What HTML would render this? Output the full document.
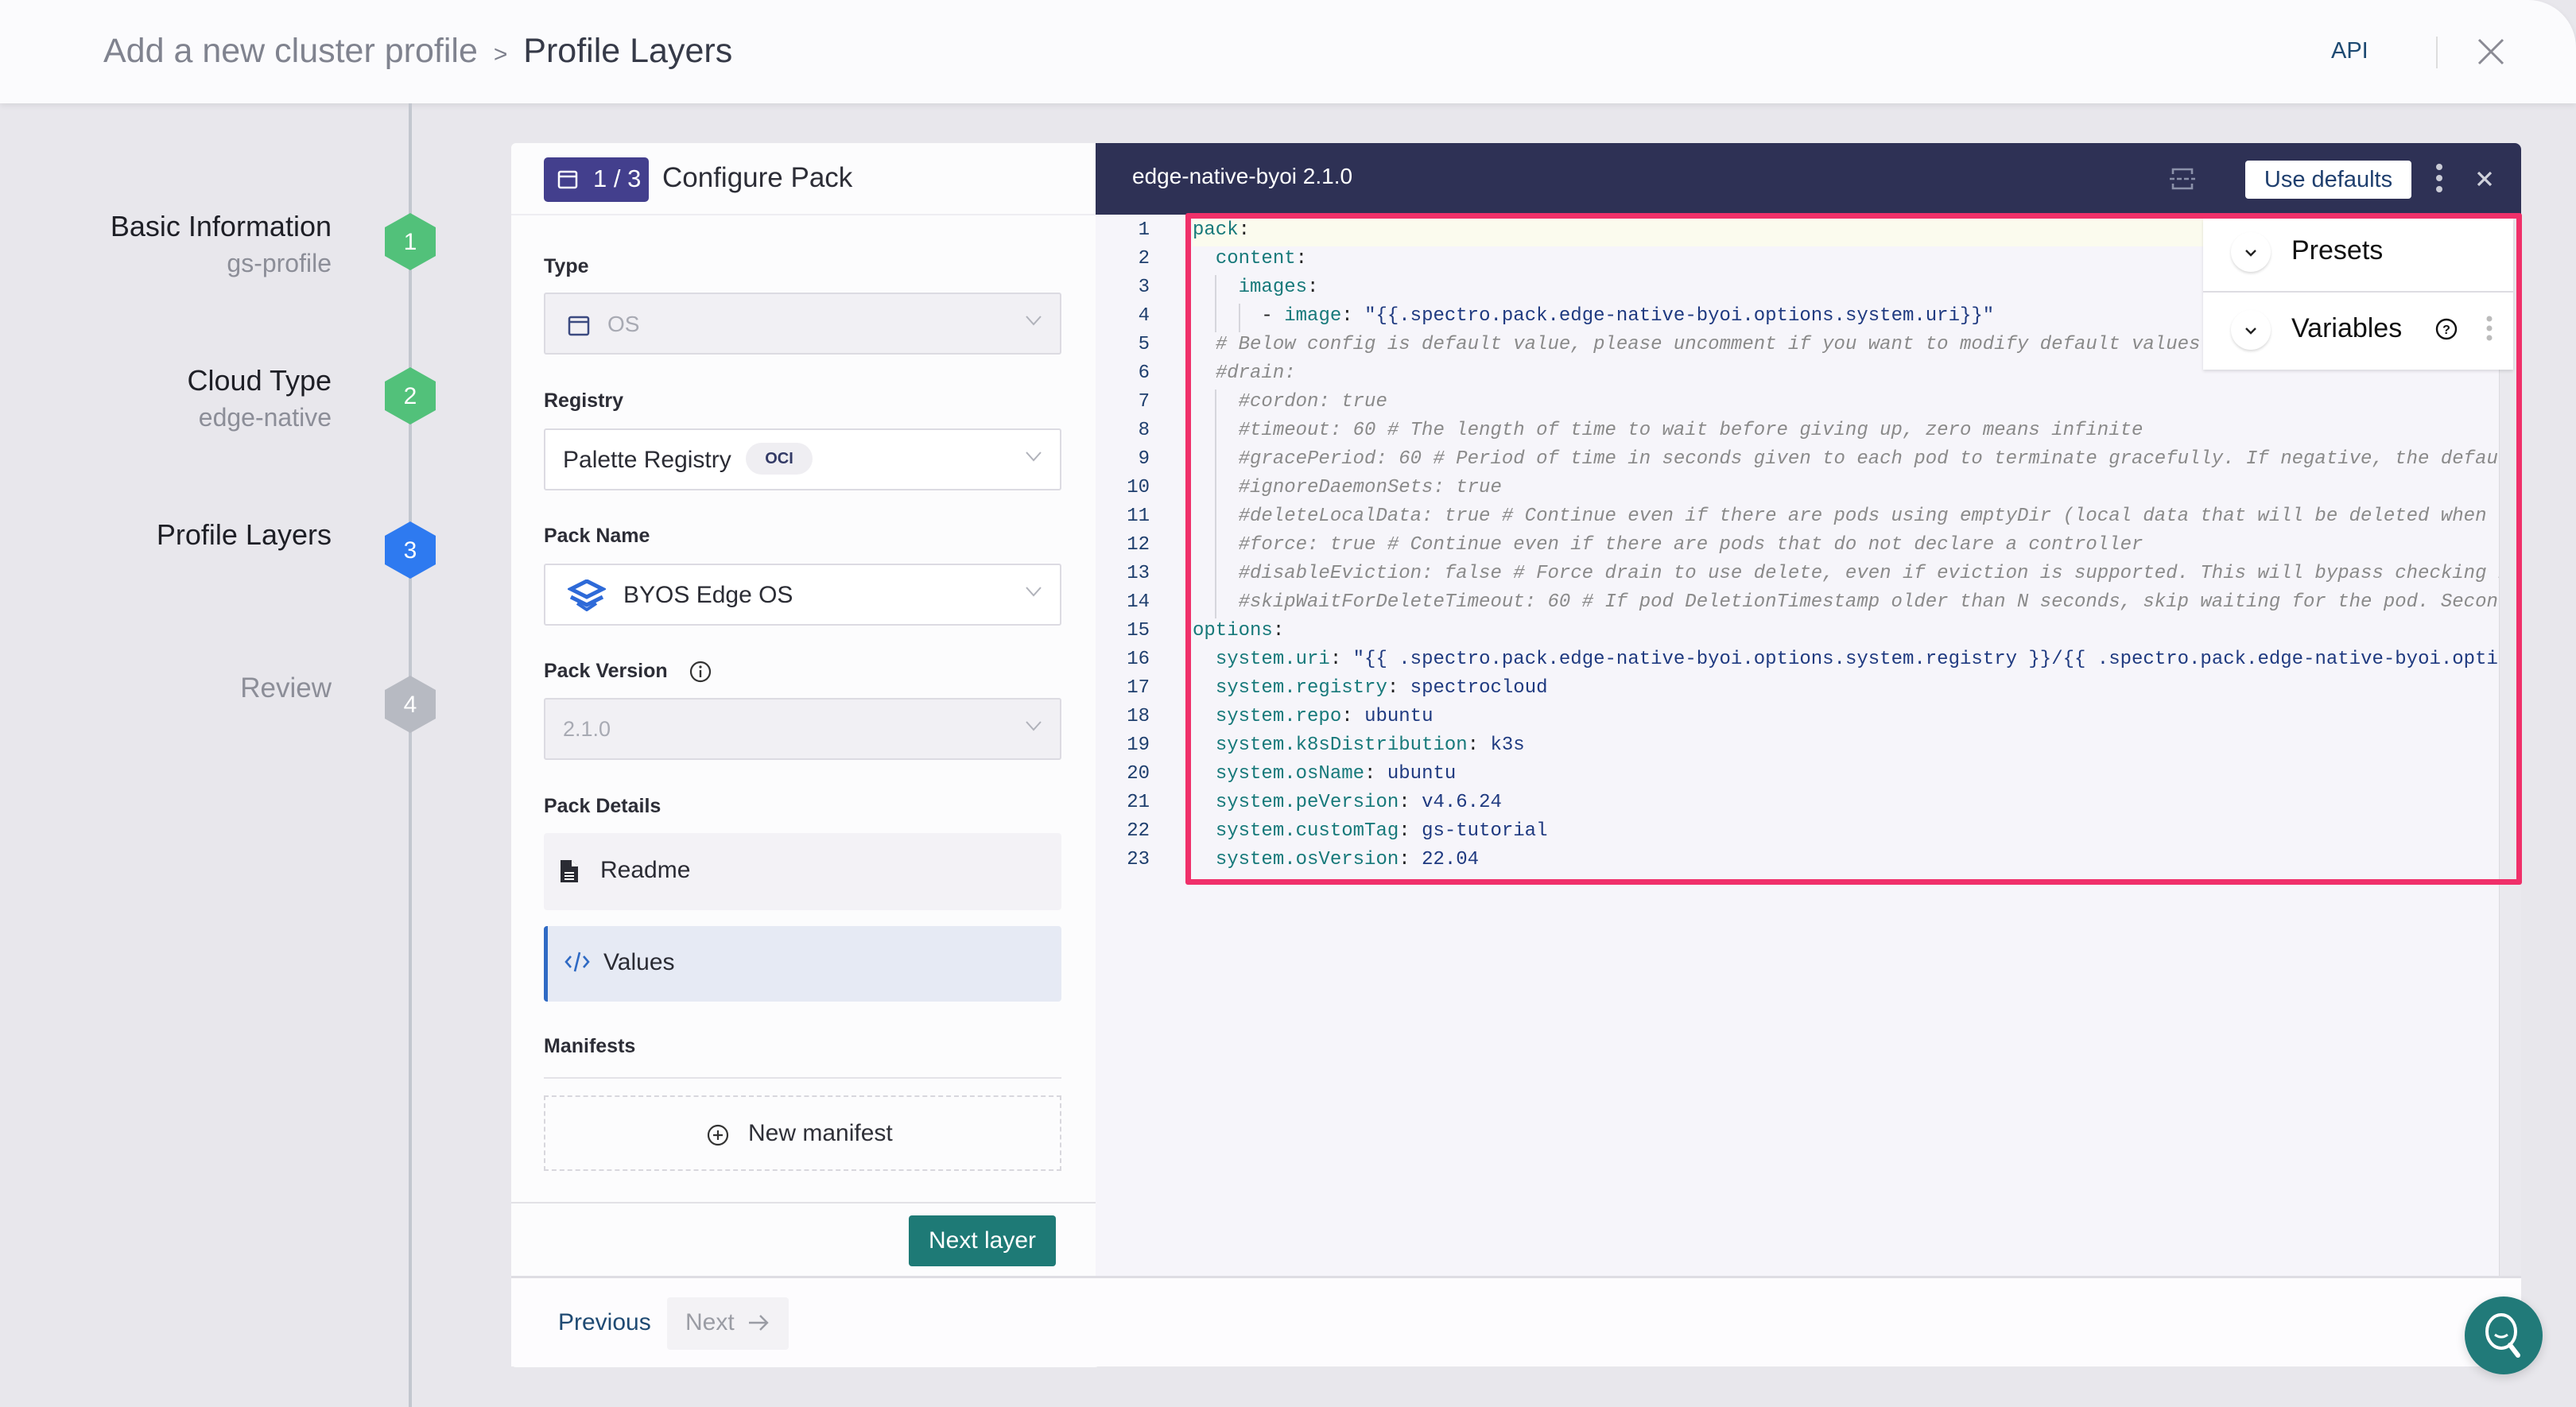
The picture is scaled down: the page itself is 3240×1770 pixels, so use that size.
<!DOCTYPE html>
<html><head><meta charset="utf-8">
<style>
*{box-sizing:border-box;margin:0;padding:0}
html,body{width:3240px;height:1770px;overflow:hidden;background:#e8e7ec;font-family:"Liberation Sans",sans-serif}
.abs{position:absolute}
.hdr{left:0;top:0;width:3240px;height:130px;background:#fbfbfd;box-shadow:0 3px 8px rgba(0,0,0,.08);border-top-right-radius:60px}
.lbl{font-size:25px;font-weight:bold;color:#2c2d36}
.sel{left:684px;width:651px;height:78px;border:2px solid #dcdbe2;border-radius:3px;background:#fff}
.sel .chev{position:absolute;right:22px;top:26px}
.code{left:1380px;top:270px;width:1763px;height:840px;overflow:hidden;font-family:"Liberation Mono",monospace;font-size:24px;line-height:36px}
.k{color:#17797a}.v{color:#1f3a80}.c{color:#8a8a8a;font-style:italic}.p{color:#222}
.step{text-align:right;right:2823px;}
.g{position:absolute;width:2px;background:#d6d6dc}
</style></head><body>
<div class="abs hdr"></div>
<div class="abs" style="left:130px;top:40px;font-size:43px;color:#80838f;white-space:nowrap">Add a new cluster profile <span style="font-size:30px;margin:0 8px;color:#7d7f8c">&gt;</span> <span style="color:#363a48">Profile Layers</span></div>
<div class="abs" style="left:2932px;top:48px;font-size:29px;color:#1e4a72">API</div>
<div class="abs" style="left:3064px;top:46px;width:2px;height:40px;background:#ddd"></div>
<svg class="abs" style="left:3116px;top:48px" width="34" height="34" viewBox="0 0 34 34"><path d="M2 2L32 32M32 2L2 32" stroke="#8a8a94" stroke-width="3"/></svg>

<div class="abs" style="left:514px;top:130px;width:4px;height:1640px;background:#c3c7cf"></div>
<svg class="abs" style="left:484px;top:268px" width="64" height="72" viewBox="0 0 64 72"><path d="M32 0L64 18V54L32 72L0 54V18Z" fill="#52c17a"/><text x="32" y="46" font-size="30" fill="#fff" text-anchor="middle" font-family="Liberation Sans">1</text></svg>
<svg class="abs" style="left:484px;top:462px" width="64" height="72" viewBox="0 0 64 72"><path d="M32 0L64 18V54L32 72L0 54V18Z" fill="#52c17a"/><text x="32" y="46" font-size="30" fill="#fff" text-anchor="middle" font-family="Liberation Sans">2</text></svg>
<svg class="abs" style="left:484px;top:656px" width="64" height="72" viewBox="0 0 64 72"><path d="M32 0L64 18V54L32 72L0 54V18Z" fill="#2e7af0"/><text x="32" y="46" font-size="30" fill="#fff" text-anchor="middle" font-family="Liberation Sans">3</text></svg>
<svg class="abs" style="left:484px;top:850px" width="64" height="72" viewBox="0 0 64 72"><path d="M32 0L64 18V54L32 72L0 54V18Z" fill="#b7bac2"/><text x="32" y="46" font-size="30" fill="#fff" text-anchor="middle" font-family="Liberation Sans">4</text></svg>
<div class="abs step" style="top:264px;font-size:36px;color:#1e1f26">Basic Information</div>
<div class="abs step" style="top:313px;font-size:32px;color:#8c8e98">gs-profile</div>
<div class="abs step" style="top:458px;font-size:36px;color:#1e1f26">Cloud Type</div>
<div class="abs step" style="top:507px;font-size:32px;color:#8c8e98">edge-native</div>
<div class="abs step" style="top:652px;font-size:36px;color:#1e1f26">Profile Layers</div>
<div class="abs step" style="top:846px;font-size:35px;color:#8c8e98">Review</div>

<div class="abs" style="left:643px;top:180px;width:740px;height:1540px;background:#fcfcfd;border-radius:6px"></div>
<div class="abs" style="left:643px;top:1605px;width:2528px;height:114px;background:#fdfcfe;border-top:3px solid #dedde3"></div>
<div class="abs" style="left:643px;top:269px;width:735px;height:2px;background:#eeedf2"></div>
<div class="abs" style="left:684px;top:198px;width:132px;height:56px;background:#433f8d;border-radius:5px"></div>
<svg class="abs" style="left:700px;top:212px" width="28" height="28" viewBox="0 0 28 28"><rect x="3" y="4" width="22" height="20" rx="2" fill="none" stroke="#fff" stroke-width="2.5"/><line x1="3" y1="10" x2="25" y2="10" stroke="#fff" stroke-width="2.5"/></svg>
<div class="abs" style="left:746px;top:207px;font-size:31px;color:#fff">1 / 3</div>
<div class="abs" style="left:833px;top:204px;font-size:35px;color:#2c2d36">Configure Pack</div>

<div class="abs lbl" style="left:684px;top:321px">Type</div>
<div class="abs sel" style="top:368px;background:#f1f0f4"><svg style="position:absolute;left:28px;top:27px" width="28" height="26" viewBox="0 0 28 26"><rect x="2" y="2" width="24" height="22" rx="2" fill="none" stroke="#3b4a80" stroke-width="2.5"/><line x1="2" y1="8" x2="26" y2="8" stroke="#3b4a80" stroke-width="2.5"/></svg><span style="position:absolute;left:78px;top:22px;font-size:28px;color:#a8aab3">OS</span><svg class="chev" width="22" height="14" viewBox="0 0 22 14"><path d="M2 2L11 12L20 2" fill="none" stroke="#b0b2ba" stroke-width="2"/></svg></div>

<div class="abs lbl" style="left:684px;top:490px">Registry</div>
<div class="abs sel" style="top:539px"><span style="position:absolute;left:22px;top:21px;font-size:30px;color:#2b2c34">Palette Registry</span><span style="position:absolute;left:252px;top:16px;width:84px;height:40px;border-radius:20px;background:#efeef2;font-size:20px;font-weight:bold;color:#333a66;text-align:center;line-height:40px">OCI</span><svg class="chev" width="22" height="14" viewBox="0 0 22 14"><path d="M2 2L11 12L20 2" fill="none" stroke="#b0b2ba" stroke-width="2"/></svg></div>

<div class="abs lbl" style="left:684px;top:660px">Pack Name</div>
<div class="abs sel" style="top:709px"><svg style="position:absolute;left:28px;top:18px" width="48" height="40" viewBox="0 0 48 40"><path d="M24 2L44 12L24 22L4 12Z" fill="none" stroke="#2e6ad8" stroke-width="5"/><path d="M4 22L24 32L44 22" fill="none" stroke="#2e6ad8" stroke-width="5"/><path d="M12 30L24 38L36 30" fill="none" stroke="#2e6ad8" stroke-width="4"/></svg><span style="position:absolute;left:98px;top:21px;font-size:30px;color:#2b2c34">BYOS Edge OS</span><svg class="chev" width="22" height="14" viewBox="0 0 22 14"><path d="M2 2L11 12L20 2" fill="none" stroke="#b0b2ba" stroke-width="2"/></svg></div>

<div class="abs lbl" style="left:684px;top:830px">Pack Version</div>
<svg class="abs" style="left:866px;top:830px" width="30" height="30" viewBox="0 0 30 30"><circle cx="15" cy="15" r="12" fill="none" stroke="#333" stroke-width="2.2"/><line x1="15" y1="13" x2="15" y2="22" stroke="#333" stroke-width="2.4"/><circle cx="15" cy="9" r="1.6" fill="#333"/></svg>
<div class="abs sel" style="top:878px;background:#f1f0f4"><span style="position:absolute;left:22px;top:22px;font-size:27px;color:#a8aab3">2.1.0</span><svg class="chev" width="22" height="14" viewBox="0 0 22 14"><path d="M2 2L11 12L20 2" fill="none" stroke="#b0b2ba" stroke-width="2"/></svg></div>

<div class="abs lbl" style="left:684px;top:1000px">Pack Details</div>
<div class="abs" style="left:684px;top:1048px;width:651px;height:97px;background:#f3f2f6;border-radius:4px"></div>
<svg class="abs" style="left:703px;top:1080px" width="26" height="32" viewBox="0 0 26 32"><path d="M2 2H16L24 10V30H2Z" fill="#2a2b33"/><path d="M16 2V10H24" fill="#fff"/><path d="M7 18H19M7 22H19M7 26H19" stroke="#fff" stroke-width="2"/></svg>
<div class="abs" style="left:755px;top:1078px;font-size:30px;color:#2a2b33">Readme</div>
<div class="abs" style="left:684px;top:1165px;width:651px;height:95px;background:#e6eaf4;border-left:5px solid #2f6ac4;border-radius:4px"></div>
<svg class="abs" style="left:710px;top:1195px" width="32" height="30" viewBox="0 0 32 30"><path d="M8 8L2 15L8 22M24 8L30 15L24 22M19 3L13 27" fill="none" stroke="#2f6ac4" stroke-width="2.6"/></svg>
<div class="abs" style="left:759px;top:1194px;font-size:30px;color:#2a2b33">Values</div>

<div class="abs lbl" style="left:684px;top:1302px">Manifests</div>
<div class="abs" style="left:684px;top:1355px;width:651px;height:2px;background:#e4e3e8"></div>
<div class="abs" style="left:684px;top:1378px;width:651px;height:95px;border:2px dashed #d8d7dd"></div>
<svg class="abs" style="left:888px;top:1413px" width="30" height="30" viewBox="0 0 30 30"><circle cx="15" cy="15" r="12" fill="none" stroke="#333" stroke-width="2.2"/><path d="M15 9V21M9 15H21" stroke="#333" stroke-width="2.2"/></svg>
<div class="abs" style="left:941px;top:1409px;font-size:30px;color:#2f3038">New manifest</div>
<div class="abs" style="left:643px;top:1512px;width:735px;height:2px;background:#e2e1e6"></div>
<div class="abs" style="left:1143px;top:1529px;width:185px;height:64px;background:#1e7a76;border-radius:4px;color:#fff;font-size:30px;text-align:center;line-height:64px">Next layer</div>

<div class="abs" style="left:702px;top:1647px;font-size:30px;color:#1f4a73">Previous</div>
<div class="abs" style="left:839px;top:1632px;width:153px;height:66px;background:#f3f2f5;border-radius:4px"></div>
<div class="abs" style="left:862px;top:1647px;font-size:30px;color:#9a9ca4">Next</div>
<svg class="abs" style="left:940px;top:1652px" width="28" height="24" viewBox="0 0 28 24"><path d="M2 12H25M16 3L25 12L16 21" fill="none" stroke="#9a9ca4" stroke-width="2.4"/></svg>

<div class="abs" style="left:1378px;top:180px;width:1793px;height:1425px;background:#f6f5fa;border-top-right-radius:8px;overflow:hidden">
  <div style="position:absolute;left:0;top:0;width:1793px;height:90px;background:#2e3155"></div>
  <div style="position:absolute;right:0;top:90px;width:28px;height:1367px;background:#eae9ee;border-left:1px solid #dcdbe0"></div>
</div>
<div class="abs" style="left:1424px;top:206px;font-size:28px;color:#fff">edge-native-byoi 2.1.0</div>
<svg class="abs" style="left:2728px;top:208px" width="34" height="34" viewBox="0 0 34 34"><path d="M5 11V5H29V11M5 23V29H29V23" fill="none" stroke="#8b91aa" stroke-width="2.6"/><path d="M1 17H33" stroke="#8b91aa" stroke-width="2.6" stroke-dasharray="6 3"/></svg>
<div class="abs" style="left:2824px;top:202px;width:209px;height:48px;background:#fff;border-radius:4px;font-size:29px;color:#1f3f6e;text-align:center;line-height:48px">Use defaults</div>
<svg class="abs" style="left:3061px;top:204px" width="14" height="40" viewBox="0 0 14 40"><circle cx="7" cy="6" r="4" fill="#c9cbd6"/><circle cx="7" cy="20" r="4" fill="#c9cbd6"/><circle cx="7" cy="34" r="4" fill="#c9cbd6"/></svg>
<svg class="abs" style="left:3114px;top:214px" width="22" height="22" viewBox="0 0 22 22"><path d="M3 3L19 19M19 3L3 19" stroke="#d0d2dc" stroke-width="3.2"/></svg>

<div class="abs" style="left:1500px;top:274px;width:1640px;height:36px;background:#fbfbee"></div>
<div class="g" style="left:1528px;top:346px;height:72px"></div>
<div class="g" style="left:1558px;top:382px;height:36px"></div>
<div class="g" style="left:1528px;top:490px;height:288px"></div>
<div class="abs code">
<pre style="position:absolute;left:0;top:2px;width:66px;text-align:right;color:#1f3f6e;font-family:inherit">1
2
3
4
5
6
7
8
9
10
11
12
13
14
15
16
17
18
19
20
21
22
23</pre>
<pre style="position:absolute;left:120px;top:2px;font-family:inherit;white-space:pre"><span class="k">pack</span><span class="p">:</span>
  <span class="k">content</span><span class="p">:</span>
    <span class="k">images</span><span class="p">:</span>
      <span class="p">-</span> <span class="k">image</span><span class="p">:</span> <span class="v">"{{.spectro.pack.edge-native-byoi.options.system.uri}}"</span>
  <span class="c"># Below config is default value, please uncomment if you want to modify default values</span>
  <span class="c">#drain:</span>
    <span class="c">#cordon: true</span>
    <span class="c">#timeout: 60 # The length of time to wait before giving up, zero means infinite</span>
    <span class="c">#gracePeriod: 60 # Period of time in seconds given to each pod to terminate gracefully. If negative, the default value</span>
    <span class="c">#ignoreDaemonSets: true</span>
    <span class="c">#deleteLocalData: true # Continue even if there are pods using emptyDir (local data that will be deleted when the node is drained)</span>
    <span class="c">#force: true # Continue even if there are pods that do not declare a controller</span>
    <span class="c">#disableEviction: false # Force drain to use delete, even if eviction is supported. This will bypass checking PDBs</span>
    <span class="c">#skipWaitForDeleteTimeout: 60 # If pod DeletionTimestamp older than N seconds, skip waiting for the pod. Seconds</span>
<span class="k">options</span><span class="p">:</span>
  <span class="k">system.uri</span><span class="p">:</span> <span class="v">"{{ .spectro.pack.edge-native-byoi.options.system.registry }}/{{ .spectro.pack.edge-native-byoi.options.system.repo }}"</span>
  <span class="k">system.registry</span><span class="p">:</span> <span class="v">spectrocloud</span>
  <span class="k">system.repo</span><span class="p">:</span> <span class="v">ubuntu</span>
  <span class="k">system.k8sDistribution</span><span class="p">:</span> <span class="v">k3s</span>
  <span class="k">system.osName</span><span class="p">:</span> <span class="v">ubuntu</span>
  <span class="k">system.peVersion</span><span class="p">:</span> <span class="v">v4.6.24</span>
  <span class="k">system.customTag</span><span class="p">:</span> <span class="v">gs-tutorial</span>
  <span class="k">system.osVersion</span><span class="p">:</span> <span class="v">22.04</span></pre>
</div>

<div class="abs" style="left:2771px;top:275px;width:390px;height:190px;background:#fff;box-shadow:0 2px 4px rgba(0,0,0,.12)"></div>
<div class="abs" style="left:2771px;top:366px;width:390px;height:2px;background:#dddce2"></div>
<div class="abs" style="left:2806px;top:292px;width:50px;height:50px;border-radius:50%;box-shadow:0 2px 3px rgba(0,0,0,.15);background:#fff"></div>
<svg class="abs" style="left:2822px;top:312px" width="18" height="12" viewBox="0 0 18 12"><path d="M3 3L9 9L15 3" fill="none" stroke="#222" stroke-width="2.4"/></svg>
<div class="abs" style="left:2882px;top:296px;font-size:34px;color:#111">Presets</div>
<div class="abs" style="left:2806px;top:390px;width:50px;height:50px;border-radius:50%;box-shadow:0 2px 3px rgba(0,0,0,.15);background:#fff"></div>
<svg class="abs" style="left:2822px;top:410px" width="18" height="12" viewBox="0 0 18 12"><path d="M3 3L9 9L15 3" fill="none" stroke="#222" stroke-width="2.4"/></svg>
<div class="abs" style="left:2882px;top:394px;font-size:34px;color:#111">Variables</div>
<svg class="abs" style="left:3062px;top:399px" width="30" height="30" viewBox="0 0 30 30"><circle cx="15" cy="15" r="12" fill="none" stroke="#111" stroke-width="2.4"/><text x="15" y="21" font-size="16" font-weight="bold" text-anchor="middle" fill="#111" font-family="Liberation Sans">?</text></svg>
<svg class="abs" style="left:3125px;top:396px" width="12" height="34" viewBox="0 0 12 34"><circle cx="6" cy="5" r="3.5" fill="#bbb"/><circle cx="6" cy="17" r="3.5" fill="#bbb"/><circle cx="6" cy="29" r="3.5" fill="#bbb"/></svg>

<div class="abs" style="left:1491px;top:268px;width:1681px;height:845px;border:7px solid #f0306a;border-radius:3px"></div>

<div class="abs" style="left:3100px;top:1631px;width:98px;height:98px;border-radius:50%;background:#217a79;box-shadow:0 4px 12px rgba(0,0,0,.15)"></div>
<svg class="abs" style="left:3115px;top:1645px" width="70" height="70" viewBox="0 0 70 70"><ellipse cx="31" cy="30" rx="18" ry="21" fill="none" stroke="#fff" stroke-width="4"/><path d="M23 34Q31 40 39 34" fill="none" stroke="#fff" stroke-width="3"/><path d="M42 47L52 60" stroke="#fff" stroke-width="6" stroke-linecap="round"/></svg>
</body></html>
